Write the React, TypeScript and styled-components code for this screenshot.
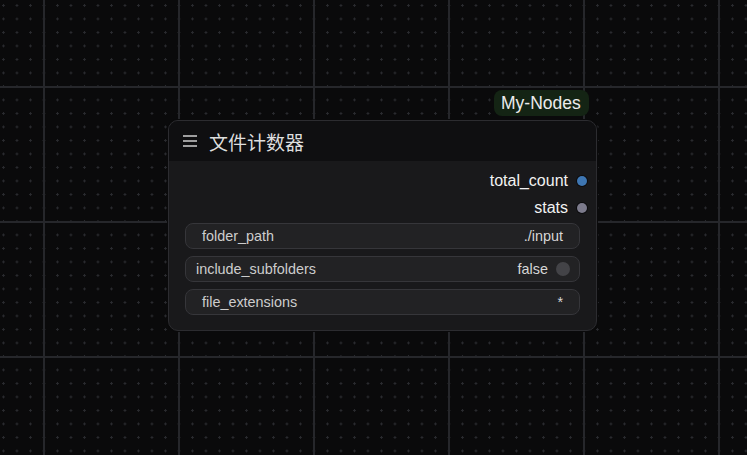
import React from "react";
import styled, { createGlobalStyle } from "styled-components";

const Global = createGlobalStyle`
  html, body { margin: 0; padding: 0; background: #0a0a0b; }
  body { font-family: "Liberation Sans", Arial, sans-serif; }
`;

const Canvas = styled.div`
  position: relative;
  width: 747px;
  height: 455px;
  overflow: hidden;
  background-color: #0a0a0b;
  background-image:
    linear-gradient(to right, #26272b 2px, transparent 2px),
    linear-gradient(to bottom, #26272b 2px, transparent 2px),
    radial-gradient(circle at 1.5px 1.5px, #2a2b2f 1.1px, transparent 1.3px);
  background-size: 135px 135px, 135px 135px, 13.5px 13.5px;
  background-position: 43px 0, 0 86px, 2px 4px;
`;

const Badge = styled.div`
  position: absolute;
  left: 494px;
  top: 90px;
  height: 26px;
  padding: 0 8px 0 7px;
  display: flex;
  align-items: center;
  border-radius: 8px;
  background: #142414;
  color: #ececec;
  font-family: "Liberation Sans", Arial, sans-serif;
  font-size: 17.5px;
`;

const Node = styled.div`
  position: absolute;
  left: 168px;
  top: 120px;
  width: 427px;
  border: 1px solid #2c2c30;
  border-radius: 10px;
  overflow: hidden;
  background: #19191b;
  box-shadow: 0 0 0 1px #0a0a0b;
`;

const Title = styled.div`
  height: 40px;
  display: flex;
  align-items: center;
  gap: 11px;
  padding-left: 13px;
  background: #0f0f11;
  color: #dedede;
  font-family: "Noto Sans CJK SC", "Noto Sans", sans-serif;
  font-size: 19px;
`;

const Body = styled.div`
  display: flex;
  flex-direction: column;
  padding: 6px 0 15px;
`;

const Output = styled.div`
  height: 27px;
  display: flex;
  align-items: center;
  justify-content: flex-end;
  gap: 9px;
  padding-right: 9px;
  color: #f2f2f2;
  font-size: 16px;
`;

const Dot = styled.span<{ $c: string }>`
  width: 10px;
  height: 10px;
  border-radius: 50%;
  background: ${(p) => p.$c};
  box-shadow: 0 0 0 1px #0c0c0e;
`;

const Widgets = styled.div`
  display: flex;
  flex-direction: column;
  gap: 7px;
  margin: 2px 16px 0;
`;

const Widget = styled.div<{ $pl: number }>`
  height: 24px;
  display: flex;
  align-items: center;
  justify-content: space-between;
  padding: 0 16px 0 ${(p) => p.$pl}px;
  border: 1px solid #36363a;
  border-radius: 8px;
  background: #222224;
  color: #cdcdcd;
  font-size: 14.4px;
`;

const Value = styled.span`
  display: flex;
  align-items: center;
  gap: 8px;
  color: #d6d6d6;
`;

const Toggle = styled.span`
  width: 14px;
  height: 14px;
  border-radius: 50%;
  background: #434347;
  margin-right: -7px;
`;

const Menu = () => (
  <svg width="16" height="14" viewBox="0 0 16 14">
    <g stroke="#cfcfcf" strokeWidth="1.6">
      <line x1="1" y1="2" x2="15" y2="2" />
      <line x1="1" y1="7" x2="15" y2="7" />
      <line x1="1" y1="12" x2="15" y2="12" />
    </g>
  </svg>
);

export default function App() {
  return (
    <>
      <Global />
      <Canvas>
        <Badge>My-Nodes</Badge>
        <Node>
          <Title>
            <Menu />
            <span>文件计数器</span>
          </Title>
          <Body>
            <Output>
              total_count <Dot $c="#3e76b2" />
            </Output>
            <Output>
              stats <Dot $c="#7c7b8c" />
            </Output>
            <Widgets>
              <Widget $pl={16}>
                <span>folder_path</span>
                <Value>./input</Value>
              </Widget>
              <Widget $pl={10}>
                <span>include_subfolders</span>
                <Value>
                  false <Toggle />
                </Value>
              </Widget>
              <Widget $pl={16}>
                <span>file_extensions</span>
                <Value>*</Value>
              </Widget>
            </Widgets>
          </Body>
        </Node>
      </Canvas>
    </>
  );
}
